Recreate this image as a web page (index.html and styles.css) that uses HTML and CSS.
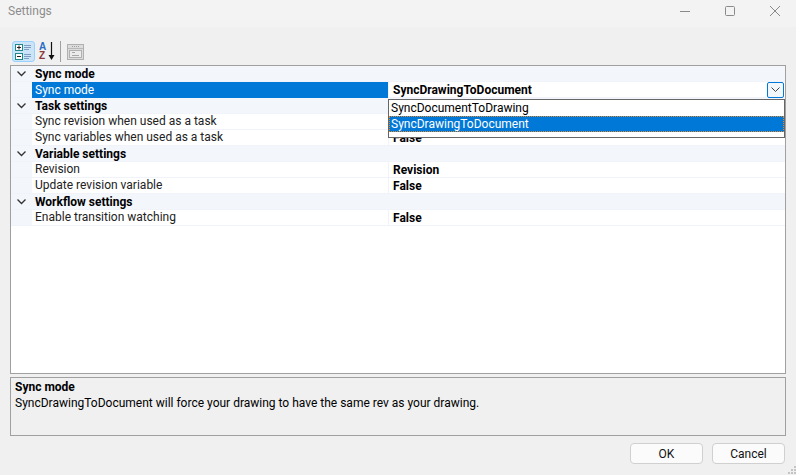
FILE: index.html
```html
<!DOCTYPE html>
<html lang="en">
  <head>
    <meta charset="UTF-8" />
    <meta name="viewport" content="width=device-width, initial-scale=1.0" />
    <title>Settings</title>
    <link rel="stylesheet" href="styles.css">
  </head>
  <body>
    <div class="titlebar">
      <span class="title">Settings</span>
      <div class="window-btns">
        <svg width="10" height="10" viewBox="0 0 10 10"><path d="M0 5.500h10" stroke="#8a8a8a" fill="none"/></svg>
        <svg width="10" height="10" viewBox="0 0 10 10"><rect x="0.500" y="0.500" width="9" height="9" rx="1" stroke="#8a8a8a" fill="none"/></svg>
        <svg width="10" height="10" viewBox="0 0 10 10"><path d="M0 0l10 10M10 0L0 10" stroke="#8a8a8a" fill="none"/></svg>
      </div>
    </div>

    <div class="toolbar">
      <button class="tool-btn active">
        <svg width="17" height="16" viewBox="0 0 17 16">
          <rect x="0.500" y="0.500" width="7" height="6" fill="#fff" stroke="#1f8a8a"/>
          <path d="M2 3.500h4M4 1.500v4" stroke="#222"/>
          <rect x="0.500" y="9.500" width="7" height="6" fill="#fff" stroke="#1f8a8a"/>
          <path d="M2 12.500h4" stroke="#222"/>
          <path d="M9 1.500h7M9 3.500h7M9 5.500h5M9 10.500h7M9 12.500h7M9 14.500h5" stroke="#7f9cc0"/>
        </svg>
      </button>
      <button class="tool-btn sort">
        <svg width="17" height="19" viewBox="0 0 17 19">
          <text x="1" y="8" class="az-a">A</text>
          <text x="1" y="17" class="az-z">Z</text>
          <path d="M13.500 0v15" stroke="#111" stroke-width="1.200"/>
          <path d="M10.500 13h6l-3 5z" fill="#111"/>
        </svg>
      </button>
      <span class="tool-sep"></span>
      <button class="tool-btn tool-last">
        <svg width="17" height="16" viewBox="0 0 17 16">
          <rect x="0.500" y="0.500" width="16" height="15" fill="#dcdcdc" stroke="#b0b0b0"/>
          <path d="M5 2.500h7" stroke="#a0a0a0" stroke-dasharray="1 1"/>
          <path d="M1 4.500h15" stroke="#b8b8b8"/>
          <rect x="2.500" y="6.500" width="12" height="7" fill="#ececec" stroke="#b0b0b0"/>
          <path d="M5 8.500h3M5 11.500h7" stroke="#a8a8a8"/>
        </svg>
      </button>
    </div>

    <div class="grid">
      <div class="row category">
        <span class="toggle"><svg width="9" height="6" viewBox="0 0 9 6"><path d="M0.500 0.500l4 4 4-4" stroke="#333" stroke-width="1.300" fill="none"/></svg></span>
        <span class="cat-name">Sync mode</span>
      </div>
      <div class="row selected">
        <span class="name">Sync mode</span>
        <span class="value">SyncDrawingToDocument</span>
        <span class="drop-btn"><svg width="9" height="5" viewBox="0 0 9 5"><path d="M0.500 0.500l4 4 4-4" stroke="#444" fill="none"/></svg></span>
      </div>
      <div class="row category">
        <span class="toggle"><svg width="9" height="6" viewBox="0 0 9 6"><path d="M0.500 0.500l4 4 4-4" stroke="#333" stroke-width="1.300" fill="none"/></svg></span>
        <span class="cat-name">Task settings</span>
      </div>
      <div class="row">
        <span class="name">Sync revision when used as a task</span>
        <span class="value">False</span>
      </div>
      <div class="row">
        <span class="name">Sync variables when used as a task</span>
        <span class="value">False</span>
      </div>
      <div class="row category">
        <span class="toggle"><svg width="9" height="6" viewBox="0 0 9 6"><path d="M0.500 0.500l4 4 4-4" stroke="#333" stroke-width="1.300" fill="none"/></svg></span>
        <span class="cat-name">Variable settings</span>
      </div>
      <div class="row">
        <span class="name">Revision</span>
        <span class="value">Revision</span>
      </div>
      <div class="row">
        <span class="name">Update revision variable</span>
        <span class="value">False</span>
      </div>
      <div class="row category">
        <span class="toggle"><svg width="9" height="6" viewBox="0 0 9 6"><path d="M0.500 0.500l4 4 4-4" stroke="#333" stroke-width="1.300" fill="none"/></svg></span>
        <span class="cat-name">Workflow settings</span>
      </div>
      <div class="row">
        <span class="name">Enable transition watching</span>
        <span class="value">False</span>
      </div>

      <div class="dropdown">
        <div class="option">SyncDocumentToDrawing</div>
        <div class="option current">SyncDrawingToDocument</div>
      </div>
    </div>

    <div class="help">
      <div class="help-title">Sync mode</div>
      <div class="help-text">SyncDrawingToDocument will force your drawing to have the same rev as your drawing.</div>
    </div>

    <div class="footer">
      <button class="btn">OK</button>
      <button class="btn">Cancel</button>
    </div>
    <svg class="grip" width="10" height="10" viewBox="0 0 10 10">
      <path d="M8 1h2v2H8zM5 4h2v2H5zM8 4h2v2H8zM2 7h2v2H2zM5 7h2v2H5zM8 7h2v2H8z" fill="#c4c4c4"/>
    </svg>
  </body>
</html>
```

FILE: styles.css
```css
body {
  font-family: Roboto, Arial, sans-serif;
  font-size: 12px;
  background-color: #f0f0f0;
  color: #000;
  margin: 0;
  padding: 0;
  width: 796px;
  height: 475px;
  overflow: hidden;
  position: relative;
}
svg {
  display: block;
}
.titlebar {
  height: 27px;
  background-color: #f3f3f3;
  display: flex;
  justify-content: space-between;
  align-items: center;
  padding: 0 16px 5px 8px;
  box-sizing: border-box;
}
.title {
  color: #8c8c8c;
}
.window-btns {
  display: flex;
  gap: 35px;
}
.toolbar {
  display: flex;
  align-items: center;
  height: 21px;
  margin-top: 14px;
  padding-left: 12px;
}
.tool-btn {
  width: 23px;
  height: 21px;
  padding: 0;
  border: 1px solid transparent;
  border-radius: 3px;
  background: none;
  display: flex;
  align-items: center;
  justify-content: center;
  box-sizing: border-box;
}
.tool-btn.active {
  background-color: #cce4f7;
  border-color: #99d1ff;
}
.tool-btn.sort {
  width: 21px;
  margin-left: 1px;
}
.tool-last {
  margin-left: 3px;
}
.tool-sep {
  width: 1px;
  height: 21px;
  background-color: #a0a0a0;
  margin-left: 3px;
}
.az-a {
  font-size: 10px;
  font-weight: bold;
  fill: #2b6cc4;
}
.az-z {
  font-size: 10px;
  font-weight: bold;
  fill: #8a3a3a;
}
.grid {
  position: relative;
  margin: 3px 10px 0;
  height: 307px;
  border: 1px solid #a0a0a0;
  background-color: #fff;
}
.row {
  height: 16px;
  display: flex;
  align-items: center;
  box-sizing: border-box;
  border-bottom: 1px solid #f0f3f9;
  padding-left: 21px;
  background-color: #fff;
  box-shadow: inset 21px 0 0 #f3f6fb;
}
.category {
  background-color: #f3f6fb;
  font-weight: bold;
  padding-left: 0;
  box-shadow: none;
}
.toggle {
  width: 24px;
  padding-left: 6px;
  box-sizing: border-box;
}
.name {
  width: 357px;
  padding-left: 3px;
  box-sizing: border-box;
  border-right: 1px solid #f0f3f9;
  color: #222;
  line-height: 15px;
  flex: none;
}
.value {
  font-weight: bold;
  padding-left: 4px;
  flex: 1;
}
.selected .name {
  background-color: #0078d7;
  color: #fff;
  height: 16px;
  line-height: 16px;
}
.drop-btn {
  width: 15px;
  height: 14px;
  margin-right: 1px;
  border: 1px solid #0078d7;
  border-radius: 2px;
  background-color: #f2f7fc;
  display: flex;
  align-items: center;
  justify-content: center;
}
.dropdown {
  position: absolute;
  left: 377px;
  top: 33px;
  width: 395px;
  height: 37px;
  border: 1px solid #666;
  background-color: #fff;
}
.option {
  height: 16px;
  line-height: 16px;
  padding-left: 2px;
}
.option.current {
  background-color: #0078d7;
  color: #fff;
  outline: 1px dotted #e08a2c;
  outline-offset: -1px;
}
.help {
  margin: 3px 10px 0;
  height: 55px;
  border: 1px solid #a0a0a0;
  padding: 1px 4px;
}
.help-title {
  font-weight: bold;
  line-height: 16px;
}
.help-text {
  line-height: 16px;
}
.footer {
  display: flex;
  justify-content: flex-end;
  gap: 9px;
  margin-top: 7px;
  padding-right: 11px;
}
.btn {
  width: 73px;
  height: 21px;
  padding: 0;
  background-color: #fbfbfb;
  border: 1px solid #d0d0d0;
  border-radius: 4px;
  font-family: inherit;
  font-size: 12px;
  color: #111;
}
.grip {
  position: absolute;
  right: 0;
  bottom: 0;
}
```
